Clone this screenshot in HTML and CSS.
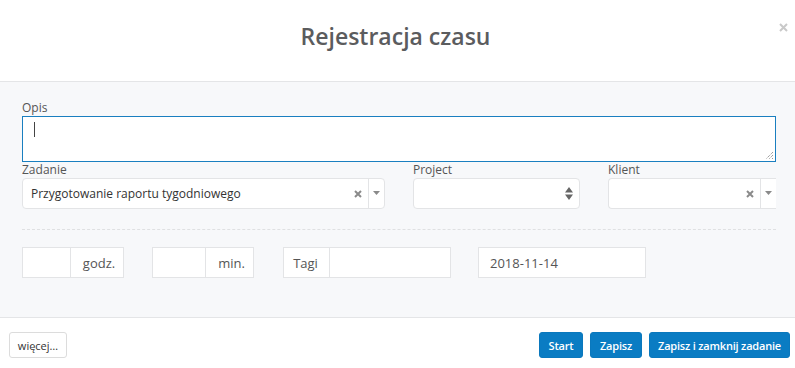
FILE: index.html
```html
<!DOCTYPE html>
<html lang="pl">
<head>
<meta charset="utf-8">
<title>Rejestracja czasu</title>
<link rel="stylesheet" href="styles.css">
</head>
<body>
<div class="modal">
  <header class="modal-header">
    <h1 class="modal-title">Rejestracja czasu</h1>
    <button class="close" aria-label="Zamknij">
      <svg width="9" height="9" viewBox="0 0 9 9"><path d="M1 1L8 8M8 1L1 8" stroke="#c9c9c9" stroke-width="2"/></svg>
    </button>
  </header>
  <main class="modal-body">
    <label class="label">Opis</label>
    <div class="textarea">
      <span class="caret"></span>
      <svg class="grip" width="10" height="10" viewBox="0 0 10 10"><path d="M9 2L2 9M9 5L5 9M9 8L8 9" stroke="#777" stroke-width="1" stroke-dasharray="1 1"/></svg>
    </div>
    <div class="fields">
      <div class="field f-task">
        <label class="label">Zadanie</label>
        <div class="select">
          <span class="sel-text">Przygotowanie raportu tygodniowego</span>
          <span class="sel-clear"><svg width="8" height="8" viewBox="0 0 8 8"><path d="M1 1L7 7M7 1L1 7" stroke="#8a8a8a" stroke-width="2"/></svg></span>
          <span class="sel-arrow"><svg width="7" height="4" viewBox="0 0 7 4"><path d="M0 0H7L3.5 4Z" fill="#8a8a8a"/></svg></span>
        </div>
      </div>
      <div class="field f-project">
        <label class="label">Project</label>
        <div class="select">
          <span class="sel-text"></span>
          <span class="sel-updown"><svg width="8" height="13" viewBox="0 0 8 13"><path d="M4 0L8 5.5H0Z M0 7.5H8L4 13Z" fill="#666"/></svg></span>
        </div>
      </div>
      <div class="field f-client">
        <label class="label">Klient</label>
        <div class="select">
          <span class="sel-text"></span>
          <span class="sel-clear"><svg width="8" height="8" viewBox="0 0 8 8"><path d="M1 1L7 7M7 1L1 7" stroke="#8a8a8a" stroke-width="2"/></svg></span>
          <span class="sel-arrow"><svg width="7" height="4" viewBox="0 0 7 4"><path d="M0 0H7L3.5 4Z" fill="#8a8a8a"/></svg></span>
        </div>
      </div>
    </div>
    <hr class="dashed">
    <div class="inputs">
      <div class="group g-hours">
        <span class="box b-hours"></span>
        <span class="addon a-hours">godz.</span>
      </div>
      <div class="group g-min">
        <span class="box b-min"></span>
        <span class="addon a-min">min.</span>
      </div>
      <div class="group g-tags">
        <span class="addon a-tags">Tagi</span>
        <span class="box b-tags"></span>
      </div>
      <div class="box b-date">2018-11-14</div>
    </div>
  </main>
  <footer class="modal-footer">
    <button class="btn btn-default">więcej…</button>
    <div class="actions">
      <button class="btn btn-primary b-start">Start</button>
      <button class="btn btn-primary b-save">Zapisz</button>
      <button class="btn btn-primary b-close">Zapisz i zamknij zadanie</button>
    </div>
  </footer>
</div>
</body>
</html>
```

FILE: styles.css
```css
* { box-sizing: border-box; }
html, body { margin: 0; padding: 0; }
body {
  width: 795px;
  height: 368px;
  overflow: hidden;
  background: #fff;
  font-family: "Open Sans", "Noto Sans", sans-serif;
  color: #555;
}
.modal { width: 795px; }

.modal-header {
  position: relative;
  height: 82px;
  border-bottom: 1px solid #e4e5e7;
  display: flex;
  align-items: center;
  justify-content: center;
}
.modal-title {
  margin: 0;
  padding-bottom: 9px;
  padding-right: 4px;
  font-size: 23px;
  font-weight: 600;
  color: #5b5c5e;
  letter-spacing: 0;
}
.close {
  position: absolute;
  right: 7px;
  top: 23px;
  border: 0;
  background: none;
  padding: 0;
  width: 9px;
  height: 9px;
  display: flex;
}

.modal-body {
  background: #f7f8fa;
  height: 236px;
  padding: 18px 19px 0 22px;
  border-bottom: 1px solid #e4e5e7;
}
.label {
  display: block;
  font-size: 12px;
  line-height: 16px;
  color: #555;
}
.textarea {
  position: relative;
  height: 46px;
  background: #fff;
  border: 1px solid #1a7fc0;
}
.caret {
  position: absolute;
  left: 11px;
  top: 5px;
  width: 1px;
  height: 15px;
  background: #444;
}
.grip {
  position: absolute;
  right: 1px;
  bottom: 1px;
}

.fields {
  display: flex;
  gap: 28px;
  overflow: hidden;
}
.field { flex: none; }
.f-task { width: 363px; }
.f-project { width: 167px; }
.f-client { width: 180px; }
.f-client .select { border-right: 0; border-top-right-radius: 0; border-bottom-right-radius: 0; width: 168px; }
.select {
  display: flex;
  align-items: center;
  height: 31px;
  background: #fff;
  border: 1px solid #e3e4e6;
  border-radius: 4px;
}
.sel-text {
  flex: 1;
  padding-left: 8px;
  font-size: 12px;
  color: #333;
  white-space: nowrap;
}
.sel-clear {
  width: 23px;
  display: flex;
  justify-content: center;
  padding-left: 2px;
}
.sel-arrow {
  width: 16px;
  height: 29px;
  border-left: 1px solid #e3e4e6;
  display: flex;
  align-items: center;
  justify-content: center;
  padding-bottom: 2px;
}
.sel-updown {
  width: 20px;
  display: flex;
  justify-content: center;
}

.dashed {
  margin: 20px 0 0;
  border: 0;
  border-top: 1px dashed #dfe0e2;
  height: 0;
}

.inputs {
  display: flex;
  margin-top: 17px;
  height: 31px;
}
.group { display: flex; }
.box, .addon {
  height: 31px;
  background: #fff;
  border: 1px solid #e3e4e6;
  font-size: 13px;
  color: #555;
  display: flex;
  align-items: center;
}
.addon { justify-content: center; }
.b-hours { width: 49px; }
.a-hours { width: 53px; border-left: 0; padding-left: 4px; }
.g-min { margin-left: 28px; }
.b-min { width: 54px; }
.a-min { width: 48px; border-left: 0; padding-left: 4px; }
.g-tags { margin-left: 29px; }
.a-tags { width: 47px; padding-right: 2px; }
.b-tags { width: 121px; border-left: 0; }
.b-date { width: 168px; margin-left: 27px; padding-left: 11px; }

.modal-footer {
  display: flex;
  justify-content: space-between;
  padding: 14px 5px 0 9px;
}
.btn {
  height: 26px;
  font-family: inherit;
  font-size: 12px;
  border-radius: 3px;
  padding: 0;
  white-space: nowrap;
  cursor: pointer;
}
.btn-default {
  width: 58px;
  background: #fff;
  border: 1px solid #dcdcdc;
  color: #333;
  font-size: 11px;
}
.actions { display: flex; gap: 7px; }
.btn-primary {
  background: #0a7cc3;
  border: 1px solid #0a78bd;
  color: #fff;
  font-size: 11px;
  font-weight: 600;
  letter-spacing: -0.2px;
}
.b-start { width: 44px; }
.b-save { width: 52px; }
.b-close { width: 141px; }
```
